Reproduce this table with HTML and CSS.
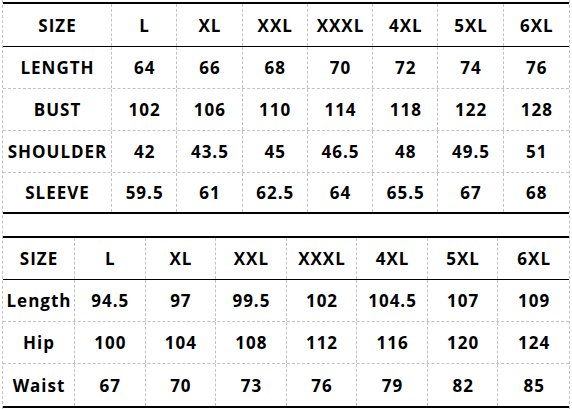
FILE: index.html
```html
<!DOCTYPE html>
<html>
<head>
<meta charset="utf-8">
<link rel="stylesheet" href="styles.css">
</head>
<body>
<div class="sheet">
  <div class="table t1">
    <div class="row head">
      <div class="cell">SIZE</div><div class="cell">L</div><div class="cell">XL</div><div class="cell">XXL</div><div class="cell">XXXL</div><div class="cell">4XL</div><div class="cell">5XL</div><div class="cell">6XL</div>
    </div>
    <div class="row">
      <div class="cell">LENGTH</div><div class="cell">64</div><div class="cell">66</div><div class="cell">68</div><div class="cell">70</div><div class="cell">72</div><div class="cell">74</div><div class="cell">76</div>
    </div>
    <div class="row">
      <div class="cell">BUST</div><div class="cell">102</div><div class="cell">106</div><div class="cell">110</div><div class="cell">114</div><div class="cell">118</div><div class="cell">122</div><div class="cell">128</div>
    </div>
    <div class="row">
      <div class="cell">SHOULDER</div><div class="cell">42</div><div class="cell">43.5</div><div class="cell">45</div><div class="cell">46.5</div><div class="cell">48</div><div class="cell">49.5</div><div class="cell">51</div>
    </div>
    <div class="row last">
      <div class="cell">SLEEVE</div><div class="cell">59.5</div><div class="cell">61</div><div class="cell">62.5</div><div class="cell">64</div><div class="cell">65.5</div><div class="cell">67</div><div class="cell">68</div>
    </div>
  </div>

  <div class="table t2">
    <div class="row head">
      <div class="cell">SIZE</div><div class="cell">L</div><div class="cell">XL</div><div class="cell">XXL</div><div class="cell">XXXL</div><div class="cell">4XL</div><div class="cell">5XL</div><div class="cell">6XL</div>
    </div>
    <div class="row">
      <div class="cell">Length</div><div class="cell">94.5</div><div class="cell">97</div><div class="cell">99.5</div><div class="cell">102</div><div class="cell">104.5</div><div class="cell">107</div><div class="cell">109</div>
    </div>
    <div class="row">
      <div class="cell">Hip</div><div class="cell">100</div><div class="cell">104</div><div class="cell">108</div><div class="cell">112</div><div class="cell">116</div><div class="cell">120</div><div class="cell">124</div>
    </div>
    <div class="row last">
      <div class="cell">Waist</div><div class="cell">67</div><div class="cell">70</div><div class="cell">73</div><div class="cell">76</div><div class="cell">79</div><div class="cell">82</div><div class="cell">85</div>
    </div>
  </div>
</div>
</body>
</html>
```

FILE: styles.css
```css
html, body {
  margin: 0;
  padding: 0;
  background: #ffffff;
}

body {
  width: 572px;
  height: 409px;
  overflow: hidden;
  font-family: "Open Sans", "Liberation Sans", sans-serif;
  font-weight: 700;
  font-size: 17px;
  letter-spacing: 1px;
  color: #000;
}

.sheet {
  box-sizing: border-box;
  margin-left: 2px;
  width: 568px;
  height: 409px;
  padding-top: 2px;
  border-left: 1px dashed #c3c3c3;
  border-right: 1px dashed #c3c3c3;
}

.table {
  border-top: 2px solid #000;
  border-bottom: 2px solid #000;
}

.t2 {
  margin-top: 22px;
}

.row {
  display: grid;
  box-sizing: border-box;
  height: 42px;
  border-bottom: 1px dashed #c3c3c3;
}

.t1 .row {
  grid-template-columns: 109px repeat(7, 1fr);
}

.t2 .row {
  grid-template-columns: 72px repeat(7, 1fr);
}

.row.head {
  border-bottom: 1px solid #000;
}

.t1 .row.head {
  height: 43px;
}

.t1 .row.last {
  height: 39px;
  border-bottom: none;
}

.t2 .row.last {
  height: 42px;
  border-bottom: none;
}

.cell {
  display: flex;
  align-items: center;
  justify-content: center;
  border-right: 1px dashed #c3c3c3;
  white-space: nowrap;
  padding-left: 1px;
}

.cell:last-child {
  border-right: none;
}
```
